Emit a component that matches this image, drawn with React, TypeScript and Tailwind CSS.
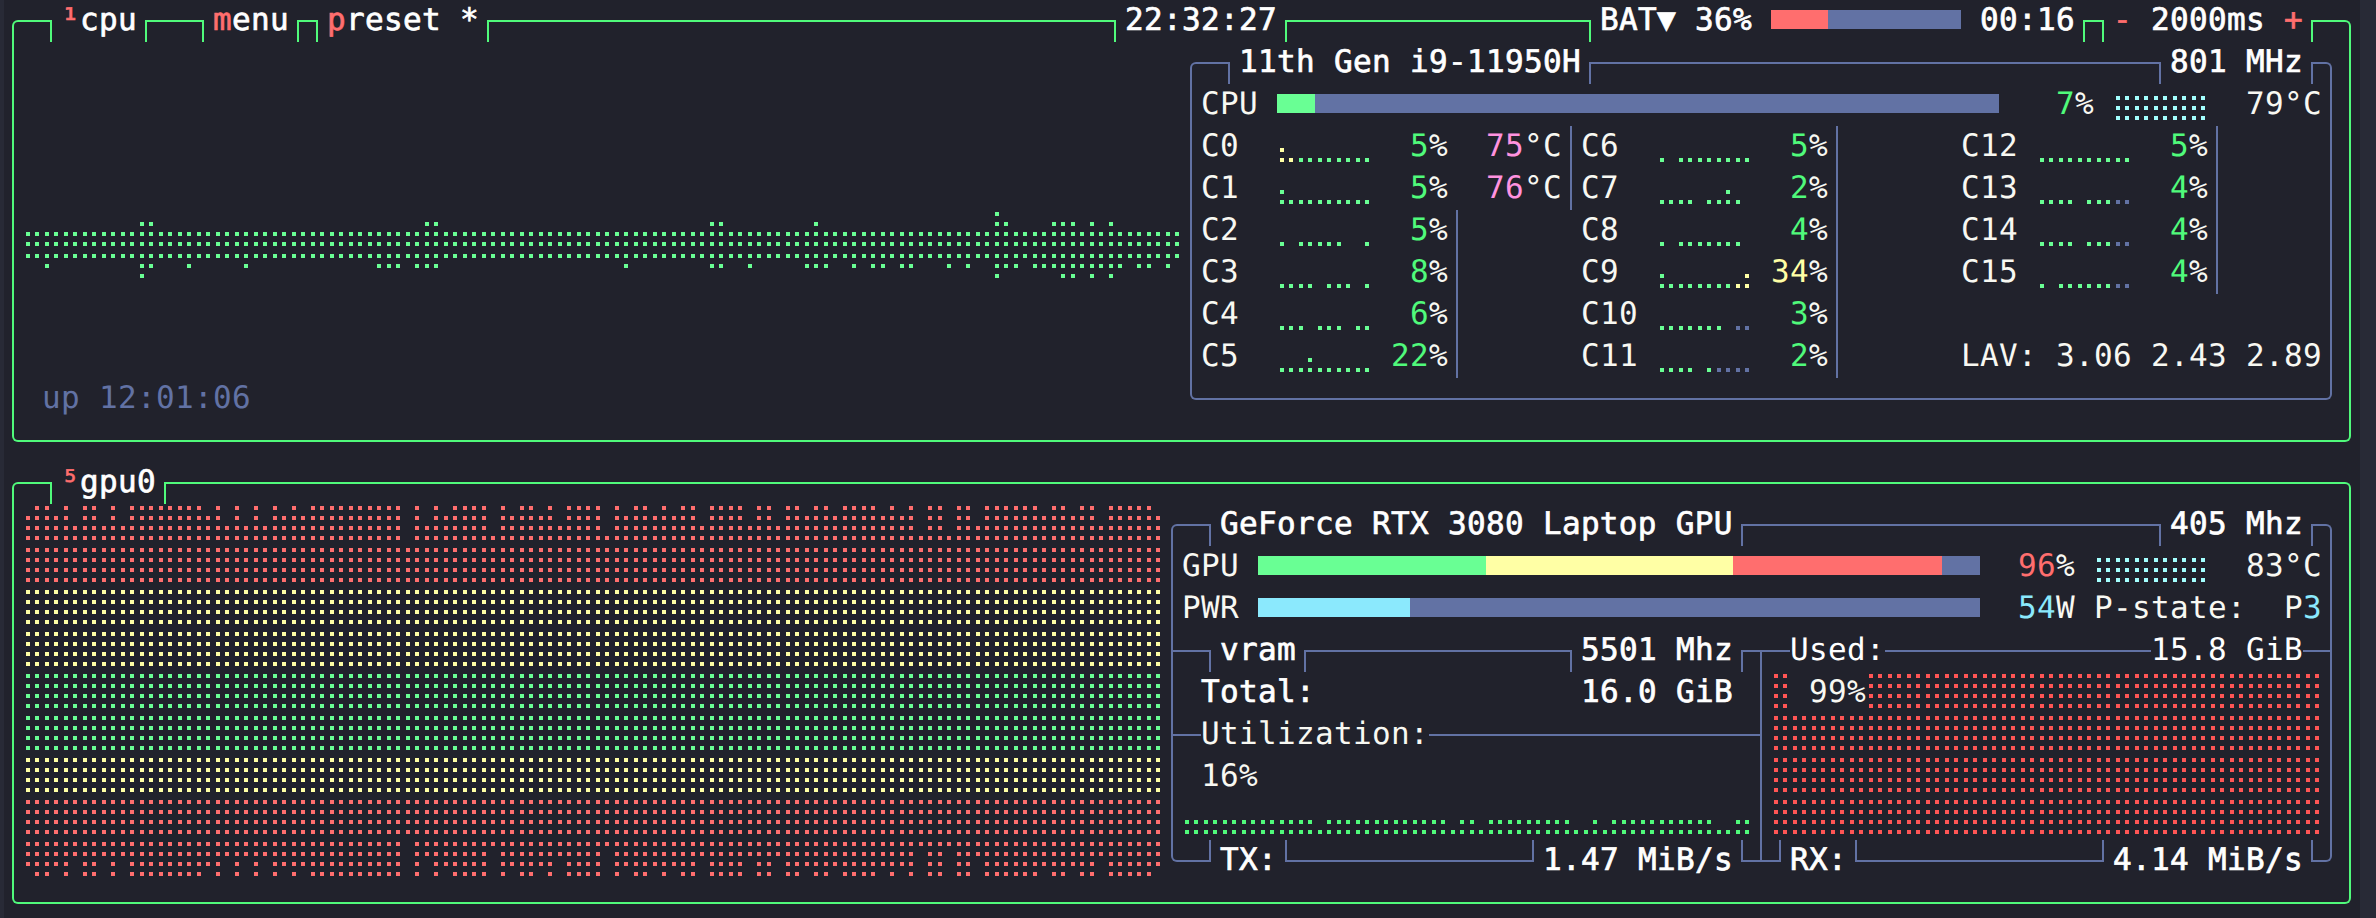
import React from "react";

const G = "border-[#50fa7b]";
const B = "border-[#6272a4]";
const RED = "text-[#ff6e6e]";
const BOLD = "text-white [-webkit-text-stroke:0.7px]";
const GREEN = "#69ff94";
const BLUE = "#6272a4";
const YELLOW = "#ffffa5";

function parse(s: string): number[] {
  const out: number[] = [];
  for (const p of s.split(",")) {
    const [a, b] = p.split("-").map(Number);
    for (let i = a; i <= (b ?? a); i++) out.push(i);
  }
  return out;
}
const dotX = (i: number) => 19 * Math.floor(i / 2) + (i % 2 ? 12 : 3);

type DotRow = { y: number; dots: number[]; color: string };
function Dots({ w, h, rows, className }: { w: number; h: number; rows: DotRow[]; className?: string }) {
  return (
    <svg width={w} height={h} className={"block shrink-0 " + (className ?? "")} shapeRendering="crispEdges">
      {rows.flatMap((r) =>
        r.dots.map((i) => <rect key={r.y + "-" + i} x={dotX(i)} y={r.y} width={4} height={4} fill={r.color} />)
      )}
    </svg>
  );
}

function Spark({ up, low, className }: { up: string; low: string; className?: string }) {
  const col = (c: string) => (c === "g" ? GREEN : c === "y" ? YELLOW : BLUE);
  const rows: DotRow[] = [];
  [up, low].forEach((s, ri) => {
    s.split("").forEach((c, i) => {
      if (c !== " ") rows.push({ y: ri ? 32 : 22, dots: [i], color: col(c) });
    });
  });
  return <Dots w={95} h={42} className={className} rows={rows} />;
}

function Meter({ w, className }: { w: number; className?: string }) {
  const dots = parse("0-" + (w - 1));
  return (
    <Dots
      w={(w / 2) * 19}
      h={42}
      className={className}
      rows={[12, 22, 32].map((y) => ({ y, dots, color: "#a4ffff" }))}
    />
  );
}

function Top({ color, className }: { color: string; className: string }) {
  return <div className={"mt-5 h-[22px] border-t-2 shrink-0 " + color + " " + className} />;
}
function Bot({ color, className }: { color: string; className: string }) {
  return <div className={"h-[22px] border-b-2 shrink-0 " + color + " " + className} />;
}
function Tab({ className, children }: { className: string; children: React.ReactNode }) {
  return <div className={"h-[42px] pl-[9px] pr-[8px] shrink-0 " + BOLD + " " + className}>{children}</div>;
}
function Rule({ className }: { className: string }) {
  return <div className={"mt-5 h-[2px] bg-[#6272a4] " + className} />;
}

function Core({
  label,
  up,
  low,
  pct,
  hot,
  temp,
}: {
  label: string;
  up: string;
  low: string;
  pct: string;
  hot?: boolean;
  temp?: string;
}) {
  return (
    <div className="h-[42px] flex">
      <span className="w-[76px] shrink-0">{label}</span>
      <Spark up={up} low={low} />
      <span className="w-[76px] shrink-0 text-right">
        <span className={hot ? "text-[#ffffa5]" : "text-[#50fa7b]"}>{pct}</span>%
      </span>
      {temp && (
        <span className="w-[122px] pl-[38px] shrink-0">
          <span className="text-[#ff92df]">{temp}</span>°C
        </span>
      )}
    </div>
  );
}

const E = "          ";
const cpuRows: DotRow[] = [
  { y: 2, dots: [102], color: GREEN },
  { y: 12, dots: parse("12,13,42,43,72,73,83,102,103,108,109,110,112,114"), color: GREEN },
  { y: 22, dots: parse("0-121"), color: GREEN },
  { y: 32, dots: parse("0-121"), color: GREEN },
  { y: 44, dots: parse("0-121"), color: GREEN },
  {
    y: 54,
    dots: parse(
      "2,12,13,17,23,37,38,39,41,42,43,63,72,73,76,82,83,84,87,89,90,92,93,97,99,102,103,104,106-115,117,118,120"
    ),
    color: GREEN,
  },
  { y: 64, dots: parse("12,102,109,110,112,114"), color: GREEN },
];

const R = [
  parse(
    "1,2,4,6,7,9,11-18,20,22,24,26,28,30-39,41,43,45-48,50,52,53,55,57-60,62,64,65,67,69,70,72-75,77,78,80,81,83,84,86-89,91,93,95,96,98,99,101-106,108,109,111,112,114-118"
  ),
  parse("0-4,6,7,9,11-20,22,24,26-39,41,43-48,50-55,57-60,62-70,72-75,77,78,80-93,95,96,98,99,101-112,114-119"),
  parse("0-39,41-48,50-60,62-93,95,96,98-119"),
  parse("0-39,41-119"),
];
const FULL = parse("0-119");
const rowColors = ["#ff6e6e", "#ff6e6e", YELLOW, YELLOW, GREEN, GREEN, YELLOW, "#ff6e6e", "#ff6e6e"];
const gpuRows: DotRow[] = [];
for (let n = 0; n < 36; n++) {
  const k = Math.floor(n / 4);
  const j = n % 4;
  gpuRows.push({
    y: 42 * k + 2 + 10 * j,
    dots: n < 4 ? R[n] : n >= 32 ? R[35 - n] : FULL,
    color: rowColors[k],
  });
}

const rxRows: DotRow[] = [];
for (let n = 0; n < 16; n++) {
  const k = Math.floor(n / 4);
  rxRows.push({
    y: 42 * k + 2 + 10 * (n % 4),
    dots: k === 0 ? parse("0,1,10-57") : parse("0-57"),
    color: "#ff5555",
  });
}

const Bar = ({ w, c }: { w: string; c: string }) => <div className={"h-[19px] shrink-0 " + w + " " + c} />;

export default function App() {
  return (
    <div className="w-[2376px] h-[918px] overflow-hidden flex whitespace-pre bg-[#282a36] [font-family:'DejaVu_Sans_Mono',monospace] text-[31px] tracking-[0.33px] leading-[40px] text-[#f8f8f2] [text-rendering:geometricPrecision]">
      <div className="w-[4px] shrink-0" />
      <div className="w-[2356px] shrink-0 h-[918px] overflow-hidden bg-[#21222c] flex flex-col">
        {/* CPU */}
        <section className="h-[462px] shrink-0 pl-[8px] pr-[9px] pb-5 flex flex-col">
          <header className="h-[42px] flex shrink-0">
            <Top color={G} className="w-[40px] border-x-2 rounded-tl-[6px]" />
            <Tab className="w-[93px]">
              <span className={RED}>¹</span>cpu
            </Tab>
            <Top color={G} className="w-[59px] border-x-2" />
            <Tab className="w-[93px]">
              <span className={RED}>m</span>enu
            </Tab>
            <Top color={G} className="w-[21px] border-x-2" />
            <Tab className="w-[169px]">
              <span className={RED}>p</span>reset *
            </Tab>
            <Top color={G} className="flex-1 border-x-2" />
            <Tab className="w-[169px]">22:32:27</Tab>
            <Top color={G} className="w-[306px] border-x-2" />
            <Tab className="w-[492px] flex">
              <span className="w-[171px] shrink-0">BAT▼ 36% </span>
              <div className="flex mt-[10px]">
                <Bar w="w-[57px]" c="bg-[#ff6e6e]" />
                <Bar w="w-[133px]" c="bg-[#6272a4]" />
              </div>
              <span className="pl-[19px]">00:16</span>
            </Tab>
            <Top color={G} className="w-[21px] border-x-2" />
            <Tab className="w-[207px]">
              <span className={RED}>-</span> 2000ms <span className={RED}>+</span>
            </Tab>
            <Top color={G} className="w-[40px] border-x-2 rounded-tr-[6px]" />
          </header>
          <div className={"flex-1 border-x-2 border-b-2 rounded-b-[6px] flex " + G}>
            <div className="w-[1176px] shrink-0 flex flex-col pl-[9px]">
              <Dots w={1159} h={84} className="mt-[168px]" rows={cpuRows} />
              <div className="mt-[84px] pl-[19px] h-[42px] text-[#6272a4]">up 12:01:06</div>
            </div>
            <div className="w-[1142px] h-[358px] shrink-0 flex flex-col">
              <header className="h-[42px] flex shrink-0">
                <Top color={B} className="w-[40px] border-x-2 rounded-tl-[6px]" />
                <Tab className="w-[359px]">11th Gen i9-11950H</Tab>
                <Top color={B} className="flex-1 border-x-2" />
                <Tab className="w-[150px]">801 MHz</Tab>
                <Top color={B} className="w-[21px] border-x-2 rounded-tr-[6px]" />
              </header>
              <div className={"flex-1 border-x-2 border-b-2 rounded-b-[6px] pl-[9px] " + B}>
                <div className="h-[42px] flex">
                  <span className="w-[76px] shrink-0">CPU</span>
                  <div className="flex mt-[10px]">
                    <Bar w="w-[38px]" c="bg-[#69ff94]" />
                    <Bar w="w-[684px]" c="bg-[#6272a4]" />
                  </div>
                  <span className="w-[95px] shrink-0 text-right">
                    <span className="text-[#50fa7b]">7</span>%
                  </span>
                  <Meter w={10} className="ml-[19px]" />
                  <span className="w-[114px] shrink-0 text-right">79°C</span>
                </div>
                <div className="flex h-[252px]">
                  <div className="w-[371px] shrink-0 flex flex-col">
                    <div className={"border-r-2 " + B}>
                      <Core label="C0" up={"y" + E.slice(1)} low="yygggggggg" pct="5" temp="75" />
                      <Core label="C1" up={"g" + E.slice(1)} low="gggggggggg" pct="5" temp="76" />
                    </div>
                    <div className={"w-[257px] border-r-2 " + B}>
                      <Core label="C2" up={E} low="g ggggg  g" pct="5" />
                      <Core label="C3" up={E} low="gggg ggg g" pct="8" />
                      <Core label="C4" up={E} low="ggg ggg gg" pct="6" />
                      <Core label="C5" up="   g      " low="gggggggggg" pct="22" />
                    </div>
                  </div>
                  <div className={"ml-[9px] w-[257px] shrink-0 border-r-2 " + B}>
                    <Core label="C6" up={E} low="g gggggggg" pct="5" />
                    <Core label="C7" up="       g  " low="gggg gggg " pct="2" />
                    <Core label="C8" up={E} low="g ggggggg " pct="4" />
                    <Core label="C9" up="g        y" low="ggggggggyy" pct="34" hot />
                    <Core label="C10" up={E} low="ggggggg bb" pct="3" />
                    <Core label="C11" up={E} low="gggg gbbbb" pct="2" />
                  </div>
                  <div className="ml-[123px] w-[361px] shrink-0 flex flex-col">
                    <div className={"w-[257px] border-r-2 " + B}>
                      <Core label="C12" up={E} low="gggggggggg" pct="5" />
                      <Core label="C13" up={E} low="gggg gggbb" pct="4" />
                      <Core label="C14" up={E} low="gggg gggbb" pct="4" />
                      <Core label="C15" up={E} low="g ggggggbb" pct="4" />
                    </div>
                    <div className="mt-[42px] h-[42px]">LAV: 3.06 2.43 2.89</div>
                  </div>
                </div>
              </div>
            </div>
          </div>
        </section>

        {/* GPU */}
        <section className="h-[462px] shrink-0 pl-[8px] pr-[9px] pb-5 flex flex-col">
          <header className="h-[42px] flex shrink-0">
            <Top color={G} className="w-[40px] border-x-2 rounded-tl-[6px]" />
            <Tab className="w-[112px]">
              <span className={RED}>⁵</span>gpu0
            </Tab>
            <Top color={G} className="flex-1 border-x-2 rounded-tr-[6px]" />
          </header>
          <div className={"flex-1 border-x-2 border-b-2 rounded-b-[6px] flex " + G}>
            <div className="w-[1157px] shrink-0 pl-[9px]">
              <Dots w={1140} h={378} rows={gpuRows} />
            </div>
            <div className="w-[1161px] h-[358px] shrink-0 flex flex-col">
              <header className="h-[42px] flex shrink-0">
                <Top color={B} className="w-[40px] border-x-2 rounded-tl-[6px]" />
                <Tab className="w-[530px]">GeForce RTX 3080 Laptop GPU</Tab>
                <Top color={B} className="flex-1 border-x-2" />
                <Tab className="w-[150px]">405 Mhz</Tab>
                <Top color={B} className="w-[21px] border-x-2 rounded-tr-[6px]" />
              </header>
              <div className={"border-x-2 pl-[9px] h-[84px] shrink-0 " + B}>
                <div className="h-[42px] flex">
                  <span className="w-[76px] shrink-0">GPU</span>
                  <div className="flex mt-[10px]">
                    <Bar w="w-[228px]" c="bg-[#69ff94]" />
                    <Bar w="w-[247px]" c="bg-[#ffffa5]" />
                    <Bar w="w-[209px]" c="bg-[#ff6e6e]" />
                    <Bar w="w-[38px]" c="bg-[#6272a4]" />
                  </div>
                  <span className="w-[95px] shrink-0 text-right">
                    <span className="text-[#ff6e6e]">96</span>%
                  </span>
                  <Meter w={12} className="ml-[19px]" />
                  <span className="w-[114px] shrink-0 text-right">83°C</span>
                </div>
                <div className="h-[42px] flex">
                  <span className="w-[76px] shrink-0">PWR</span>
                  <div className="flex mt-[10px]">
                    <Bar w="w-[152px]" c="bg-[#8be9fd]" />
                    <Bar w="w-[570px]" c="bg-[#6272a4]" />
                  </div>
                  <span className="w-[95px] shrink-0 text-right">
                    <span className="text-[#8be9fd]">54</span>W
                  </span>
                  <span className="ml-[19px] w-[152px] shrink-0">P-state:</span>
                  <span className="w-[76px] shrink-0 text-right">
                    P<span className="text-[#8be9fd]">3</span>
                  </span>
                </div>
              </div>
              <div className="flex flex-1">
                {/* left: vram + TX */}
                <div className="w-[589px] shrink-0 flex flex-col">
                  <div className={"h-[210px] border-l-2 flex flex-col " + B}>
                    <div className="h-[42px] flex">
                      <Top color={B} className="w-[38px] border-r-2" />
                      <Tab className="w-[93px]">vram</Tab>
                      <Top color={B} className="w-[268px] border-x-2" />
                      <Tab className="w-[169px]">5501 Mhz</Tab>
                      <Top color={B} className="flex-1 border-l-2" />
                    </div>
                    <div className={"h-[42px] pl-[28px] w-[560px] flex justify-between " + BOLD}>
                      <span>Total:</span>
                      <span>16.0 GiB</span>
                    </div>
                    <div className="h-[42px] flex">
                      <Rule className="w-[28px]" />
                      <span className="w-[228px] shrink-0">Utilization:</span>
                      <Rule className="flex-1" />
                    </div>
                    <div className="h-[42px] pl-[28px]">16%</div>
                    <div className="h-[42px] pl-[9px]">
                      <Dots
                        w={570}
                        h={42}
                        rows={[
                          { y: 22, dots: parse("0-13,15-27,29,30,32-40,43,45-55,58,59"), color: "#50fa7b" },
                          { y: 32, dots: parse("0-59"), color: "#50fa7b" },
                        ]}
                      />
                    </div>
                  </div>
                  <div className="h-[42px] flex">
                    <Bot color={B} className="w-[40px] border-x-2 rounded-bl-[6px]" />
                    <Tab className="w-[74px]">TX:</Tab>
                    <Bot color={B} className="w-[249px] border-x-2" />
                    <Tab className="w-[207px]">1.47 MiB/s</Tab>
                    <Bot color={B} className="flex-1 border-l-2" />
                  </div>
                </div>
                <div className="w-[2px] mt-5 mb-5 shrink-0 bg-[#6272a4]" />
                {/* right: used + RX */}
                <div className="flex-1 flex flex-col">
                  <div className={"h-[210px] border-r-2 flex flex-col " + B}>
                    <div className="h-[42px] flex">
                      <Rule className="w-[28px]" />
                      <span className="w-[95px] shrink-0 text-white">Used:</span>
                      <Rule className="flex-1" />
                      <span className="w-[152px] shrink-0 text-white">15.8 GiB</span>
                      <Rule className="w-[27px]" />
                    </div>
                    <div className="relative ml-[9px] h-[168px]">
                      <Dots w={551} h={168} rows={rxRows} />
                      <span className="absolute left-[38px] top-0">99%</span>
                    </div>
                  </div>
                  <div className="h-[42px] flex">
                    <Bot color={B} className="w-[19px] border-r-2" />
                    <Tab className="w-[74px]">RX:</Tab>
                    <Bot color={B} className="w-[249px] border-x-2" />
                    <Tab className="w-[207px]">4.14 MiB/s</Tab>
                    <Bot color={B} className="w-[21px] border-x-2 rounded-br-[6px]" />
                  </div>
                </div>
              </div>
            </div>
          </div>
        </section>
      </div>
      <div className="flex-1" />
    </div>
  );
}
